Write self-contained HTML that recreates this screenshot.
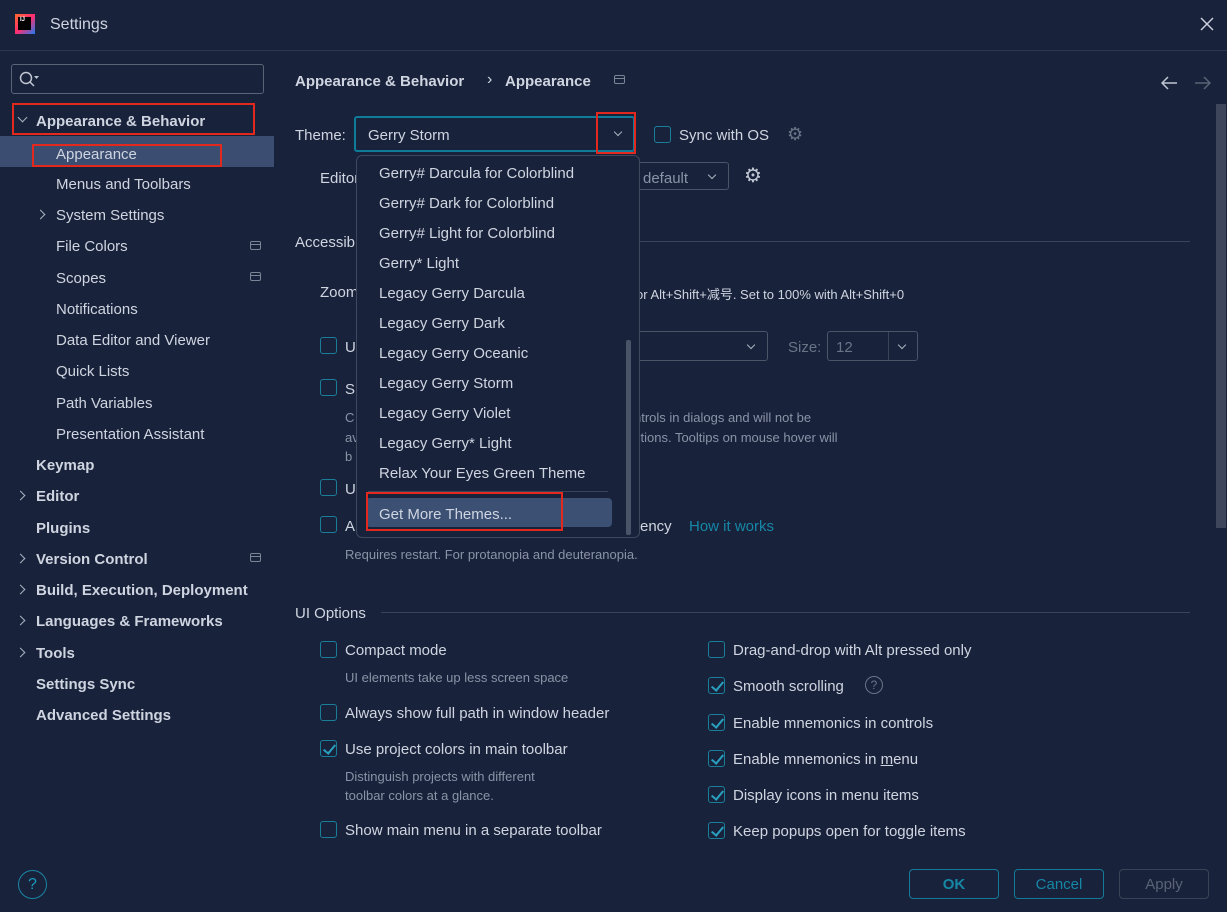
<!DOCTYPE html>
<html><head><meta charset="utf-8"><style>
*{margin:0;padding:0;box-sizing:border-box}
body{width:1227px;height:912px;background:#18223b;font-family:"Liberation Sans","Noto Sans CJK SC",sans-serif;font-size:15px;color:#cfd5e0;position:relative;overflow:hidden}
.t{position:absolute;line-height:20px;white-space:nowrap;margin-top:2px}
.b{font-weight:bold}
.g{color:#8a93a6;font-size:13px}
.red{position:absolute;border:2px solid #e3281d}
.cb{position:absolute;width:17px;height:17px;border:1.5px solid #1b7e99;border-radius:3px}
.cb.c::after{content:"";position:absolute;left:4.5px;top:0.5px;width:5px;height:10px;border:solid #2aa0bf;border-width:0 2px 2px 0;transform:rotate(40deg)}
.chev{position:absolute;width:7px;height:7px;border:solid #aab2c0;border-width:0 1.5px 1.5px 0}
.line{position:absolute;height:1px;background:#3a4458}
.ico{position:absolute;width:11px;height:9px;border:1.3px solid #7c8596;border-radius:2px}
.ico::after{content:"";position:absolute;left:0;right:0;top:2px;height:1px;background:#7c8596}
.btn{position:absolute;height:30px;border:1.5px solid #157a97;border-radius:4px;text-align:center;line-height:29px;color:#1687a6}
</style></head><body>
<!-- title -->
<div style="position:absolute;left:15px;top:14px;width:20px;height:20px;background:linear-gradient(135deg,#ff6a2b,#ff2d70 50%,#1d7cf2);"></div>
<div style="position:absolute;left:18px;top:17px;width:13px;height:13px;background:#000;color:#fff;font-size:6px;font-weight:bold;padding-left:2px;line-height:7px">IJ</div>
<div class="t" style="left:50px;top:13px;font-size:16px">Settings</div>
<svg style="position:absolute;left:1200px;top:17px" width="14" height="14"><path d="M1 1L13 13M13 1L1 13" stroke="#c8ceda" stroke-width="1.5"/></svg>
<div class="line" style="left:0;top:50px;width:1227px;background:#2b3650"></div>
<!-- sidebar -->
<div style="position:absolute;left:11px;top:64px;width:253px;height:30px;border:1.5px solid #5b6476;border-radius:3px"></div>
<svg style="position:absolute;left:18px;top:70px" width="22" height="18"><circle cx="8" cy="8" r="5.5" fill="none" stroke="#c0c7d3" stroke-width="1.5"/><line x1="12" y1="12" x2="16" y2="16" stroke="#c0c7d3" stroke-width="1.5"/><path d="M16 6h5l-2.5 3z" fill="#c0c7d3"/></svg>
<div style="position:absolute;left:0;top:136px;width:274px;height:31px;background:#3b4d70"></div>
<div class="chev" style="left:19px;top:114px;transform:rotate(45deg)"></div>
<div class="t b" style="left:36px;top:110px">Appearance &amp; Behavior</div>
<div class="t" style="left:56px;top:143px">Appearance</div>
<div class="t" style="left:56px;top:173px">Menus and Toolbars</div>
<div class="chev" style="left:37px;top:211px;transform:rotate(-45deg)"></div>
<div class="t" style="left:56px;top:204px">System Settings</div>
<div class="t" style="left:56px;top:235px">File Colors</div><div class="ico" style="left:250px;top:241px"></div>
<div class="t" style="left:56px;top:267px">Scopes</div><div class="ico" style="left:250px;top:272px"></div>
<div class="t" style="left:56px;top:298px">Notifications</div>
<div class="t" style="left:56px;top:329px">Data Editor and Viewer</div>
<div class="t" style="left:56px;top:360px">Quick Lists</div>
<div class="t" style="left:56px;top:392px">Path Variables</div>
<div class="t" style="left:56px;top:423px">Presentation Assistant</div>
<div class="t b" style="left:36px;top:454px">Keymap</div>
<div class="chev" style="left:17px;top:492px;transform:rotate(-45deg)"></div>
<div class="t b" style="left:36px;top:485px">Editor</div>
<div class="t b" style="left:36px;top:517px">Plugins</div>
<div class="chev" style="left:17px;top:555px;transform:rotate(-45deg)"></div>
<div class="t b" style="left:36px;top:548px">Version Control</div><div class="ico" style="left:250px;top:553px"></div>
<div class="chev" style="left:17px;top:586px;transform:rotate(-45deg)"></div>
<div class="t b" style="left:36px;top:579px">Build, Execution, Deployment</div>
<div class="chev" style="left:17px;top:617px;transform:rotate(-45deg)"></div>
<div class="t b" style="left:36px;top:610px">Languages &amp; Frameworks</div>
<div class="chev" style="left:17px;top:649px;transform:rotate(-45deg)"></div>
<div class="t b" style="left:36px;top:642px">Tools</div>
<div class="t b" style="left:36px;top:673px">Settings Sync</div>
<div class="t b" style="left:36px;top:704px">Advanced Settings</div>
<div style="position:absolute;left:18px;top:870px;width:29px;height:29px;border:1.5px solid #1a84a3;border-radius:50%;color:#1a9bbd;text-align:center;line-height:27px;font-size:16px">?</div>
<div class="red" style="left:12px;top:103px;width:243px;height:32px"></div>
<div class="red" style="left:32px;top:144px;width:190px;height:23px"></div>
<!-- header -->
<div class="t b" style="left:295px;top:70px">Appearance &amp; Behavior</div>
<div class="t" style="left:487px;top:68px;font-size:16px">›</div>
<div class="t b" style="left:505px;top:70px">Appearance</div>
<div class="ico" style="left:614px;top:75px"></div>
<svg style="position:absolute;left:1161px;top:76px" width="50" height="14"><path d="M1 7H16M7 1L1 7L7 13" fill="none" stroke="#c0c7d3" stroke-width="1.5"/><path d="M34 7H49M43 1L49 7L43 13" fill="none" stroke="#5a6275" stroke-width="1.5"/></svg>
<div style="position:absolute;left:1216px;top:104px;width:10px;height:424px;background:#3d465a"></div>
<!-- theme row -->
<div class="t" style="left:295px;top:124px">Theme:</div>
<div style="position:absolute;left:354px;top:116px;width:281px;height:36px;border:2.5px solid #0e7b99;border-radius:3px"></div>
<div class="t" style="left:368px;top:124px">Gerry Storm</div>
<div class="chev" style="left:615px;top:129px;transform:rotate(45deg);width:6px;height:6px"></div>
<div class="red" style="left:596px;top:112px;width:40px;height:42px"></div>
<div class="cb" style="left:654px;top:126px"></div>
<div class="t" style="left:679px;top:124px">Sync with OS</div>
<div class="t" style="left:787px;top:122px;font-size:18px;color:#6a7386">⚙</div>
<div class="t" style="left:320px;top:167px">Editor</div>
<div style="position:absolute;left:620px;top:162px;width:109px;height:28px;border:1px solid #4c5568;border-radius:3px"></div>
<div class="t" style="left:643px;top:167px;color:#8a93a6">default</div>
<div class="chev" style="left:709px;top:172px;transform:rotate(45deg);width:6px;height:6px"></div>
<div class="t" style="left:744px;top:164px;font-size:20px;color:#c0c7d3">⚙</div>
<div class="t" style="left:295px;top:231px">Accessibility</div>
<div class="line" style="left:640px;top:241px;width:550px"></div>
<div class="t" style="left:320px;top:281px">Zoom</div>
<div class="t" style="left:636px;top:283px;font-size:13px">or Alt+Shift+减号. Set to 100% with Alt+Shift+0</div>
<div class="cb" style="left:320px;top:337px"></div><div class="t" style="left:345px;top:336px">U</div>
<div style="position:absolute;left:620px;top:331px;width:148px;height:30px;border:1px solid #4c5568;border-radius:3px"></div>
<div class="chev" style="left:748px;top:342px;transform:rotate(45deg);width:6px;height:6px"></div>
<div class="t" style="left:788px;top:336px;color:#6a7386">Size:</div>
<div style="position:absolute;left:827px;top:331px;width:91px;height:30px;border:1px solid #4c5568;border-radius:3px"></div>
<div class="line" style="left:888px;top:332px;width:1px;height:28px"></div>
<div class="t" style="left:836px;top:336px;color:#6a7386">12</div>
<div class="chev" style="left:899px;top:342px;transform:rotate(45deg);width:6px;height:6px"></div>
<div class="cb" style="left:320px;top:379px"></div><div class="t" style="left:345px;top:378px">S</div>
<div class="t g" style="left:345px;top:406px">C</div><div class="t g" style="left:634px;top:406px">ntrols in dialogs and will not be</div>
<div class="t g" style="left:345px;top:426px">av</div><div class="t g" style="left:634px;top:426px">ctions. Tooltips on mouse hover will</div>
<div class="t g" style="left:345px;top:445px">b</div>
<div class="cb" style="left:320px;top:479px"></div><div class="t" style="left:345px;top:478px">U</div>
<div class="cb" style="left:320px;top:516px"></div><div class="t" style="left:345px;top:515px">A</div>
<div class="t" style="left:640px;top:515px">ency</div>
<div class="t" style="left:689px;top:515px;color:#1687a6">How it works</div>
<div class="t g" style="left:345px;top:543px">Requires restart. For protanopia and deuteranopia.</div>
<!-- popup -->
<div style="position:absolute;left:356px;top:155px;width:284px;height:383px;background:#18223b;border:1px solid #3f485c;border-radius:6px"></div>
<div class="t" style="left:379px;top:162px">Gerry# Darcula for Colorblind</div>
<div class="t" style="left:379px;top:192px">Gerry# Dark for Colorblind</div>
<div class="t" style="left:379px;top:222px">Gerry# Light for Colorblind</div>
<div class="t" style="left:379px;top:252px">Gerry* Light</div>
<div class="t" style="left:379px;top:282px">Legacy Gerry Darcula</div>
<div class="t" style="left:379px;top:312px">Legacy Gerry Dark</div>
<div class="t" style="left:379px;top:342px">Legacy Gerry Oceanic</div>
<div class="t" style="left:379px;top:372px">Legacy Gerry Storm</div>
<div class="t" style="left:379px;top:402px">Legacy Gerry Violet</div>
<div class="t" style="left:379px;top:432px">Legacy Gerry* Light</div>
<div class="t" style="left:379px;top:462px">Relax Your Eyes Green Theme</div>
<div class="line" style="left:368px;top:491px;width:240px"></div>
<div style="position:absolute;left:366px;top:498px;width:246px;height:29px;background:#3c5073;border-radius:4px"></div>
<div class="t" style="left:379px;top:503px">Get More Themes...</div>
<div style="position:absolute;left:626px;top:340px;width:5px;height:195px;background:#4a5468;border-radius:2px"></div>
<div class="red" style="left:366px;top:492px;width:197px;height:39px"></div>
<!-- UI options -->
<div class="t" style="left:295px;top:602px">UI Options</div>
<div class="line" style="left:381px;top:612px;width:809px"></div>
<div class="cb" style="left:320px;top:641px"></div><div class="t" style="left:345px;top:639px">Compact mode</div>
<div class="t g" style="left:345px;top:666px">UI elements take up less screen space</div>
<div class="cb" style="left:320px;top:704px"></div><div class="t" style="left:345px;top:702px">Always show full path in window header</div>
<div class="cb c" style="left:320px;top:740px"></div><div class="t" style="left:345px;top:738px">Use project colors in main toolbar</div>
<div class="t g" style="left:345px;top:765px">Distinguish projects with different</div>
<div class="t g" style="left:345px;top:784px">toolbar colors at a glance.</div>
<div class="cb" style="left:320px;top:821px"></div><div class="t" style="left:345px;top:819px">Show main menu in a separate toolbar</div>
<div class="cb" style="left:708px;top:641px"></div><div class="t" style="left:733px;top:639px">Drag-and-drop with Alt pressed only</div>
<div class="cb c" style="left:708px;top:677px"></div><div class="t" style="left:733px;top:675px">Smooth scrolling</div>
<div style="position:absolute;left:865px;top:676px;width:18px;height:18px;border:1.3px solid #6a7386;border-radius:50%;color:#6a7386;font-size:12px;text-align:center;line-height:16px">?</div>
<div class="cb c" style="left:708px;top:714px"></div><div class="t" style="left:733px;top:712px">Enable mnemonics in controls</div>
<div class="cb c" style="left:708px;top:750px"></div><div class="t" style="left:733px;top:748px">Enable mnemonics in <u>m</u>enu</div>
<div class="cb c" style="left:708px;top:786px"></div><div class="t" style="left:733px;top:784px">Display icons in menu items</div>
<div class="cb c" style="left:708px;top:822px"></div><div class="t" style="left:733px;top:820px">Keep popups open for toggle items</div>
<!-- buttons -->
<div class="btn b" style="left:909px;top:869px;width:90px">OK</div>
<div class="btn" style="left:1014px;top:869px;width:90px">Cancel</div>
<div class="btn" style="left:1119px;top:869px;width:90px;border-color:#3a4355;color:#5a6275">Apply</div>
</body></html>
